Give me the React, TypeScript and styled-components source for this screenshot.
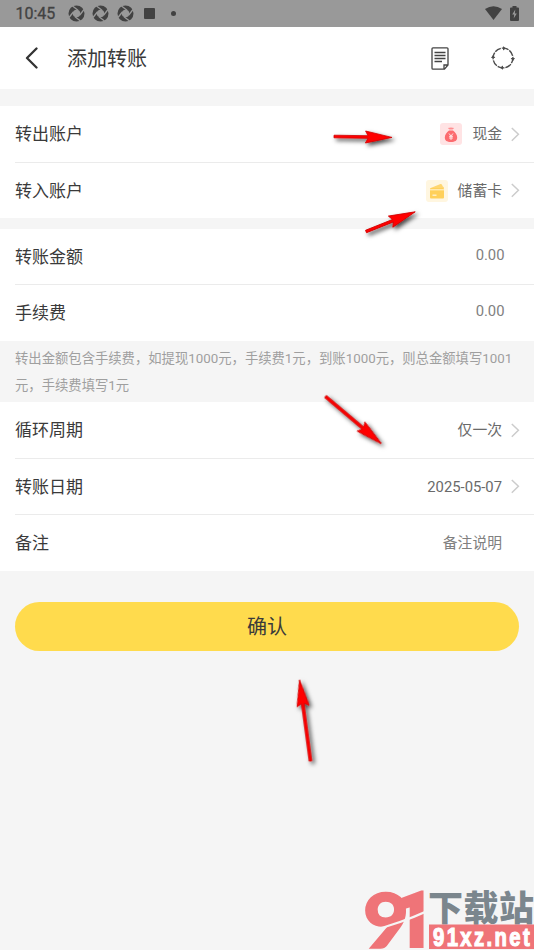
import React from "react";
import styled, { createGlobalStyle } from "styled-components";

const GlobalStyle = createGlobalStyle`
  * { box-sizing: border-box; }
  body {
    margin: 0;
    background: #f5f5f5;
    font-family: Roboto, "Noto Sans CJK SC", sans-serif;
    color: #3a3a3a;
  }
`;

const Screen = styled.div`
  position: relative;
  width: 534px;
  height: 950px;
  overflow: hidden;
  background: #f5f5f5;
`;

const StatusBar = styled.div`
  display: flex;
  align-items: center;
  height: 27px;
  padding: 0 15.5px 1px;
  background: #999;
  color: #424242;
`;

const Clock = styled.span`
  width: 52px;
  padding-top: 1px;
  font-size: 16px;
  line-height: 27px;
  font-weight: 400;
  -webkit-text-stroke: 0.3px #424242;
`;

const StatusIcons = styled.div<{ $grow?: boolean }>`
  display: flex;
  align-items: center;
  gap: 7.5px;
  flex: ${(p) => (p.$grow ? 1 : "none")};
  svg { display: block; }
`;

const Square = styled.i`
  width: 11px;
  height: 11px;
  margin-left: 3px;
  border-radius: 1px;
  background: #424242;
`;

const Dot = styled.i`
  width: 5px;
  height: 5px;
  margin-left: 8px;
  border-radius: 50%;
  background: #424242;
`;

const Header = styled.header`
  display: flex;
  align-items: center;
  height: 62px;
  padding: 0 19px 0 24px;
  background: #fff;
  svg { display: block; }
`;

const Title = styled.h1`
  flex: 1;
  margin: 0 0 0 28px;
  padding-top: 1px;
  font-size: 20px;
  line-height: 30px;
  font-weight: 400;
`;

const HeaderActions = styled.div`
  display: flex;
  align-items: center;
  gap: 41px;
`;

const Group = styled.section<{ $top?: number }>`
  margin-top: ${(p) => p.$top ?? 0}px;
  background: #fff;
`;

const Row = styled.div<{ $last?: boolean; $h?: number }>`
  display: flex;
  align-items: center;
  height: ${(p) => p.$h ?? 56}px;
  margin-left: 15px;
  padding-right: 14px;
  border-bottom: ${(p) => (p.$last ? "none" : "1px solid #ebebeb")};
`;

const Label = styled.span`
  flex: 1;
  font-size: 17px;
  line-height: 26px;
`;

const Value = styled.span<{ $tone?: string; $inset?: number; $raise?: number }>`
  margin-right: ${(p) => p.$inset ?? 9}px;
  padding-bottom: ${(p) => p.$raise ?? 0}px;
  font-size: 14.8px;
  line-height: 24px;
  color: ${(p) => p.$tone ?? "#6a6a6a"};
`;

const Badge = styled.span<{ $bg: string }>`
  display: flex;
  width: 22px;
  height: 22px;
  margin-right: 10px;
  border-radius: 3px;
  background: ${(p) => p.$bg};
`;

const Note = styled.p`
  height: 61px;
  margin: 0;
  padding: 4px 15px 0;
  font-size: 13.33px;
  line-height: 27px;
  color: #9f9f9f;
`;

const Confirm = styled.button`
  display: block;
  width: 504px;
  height: 49px;
  margin: 31px 15px 0;
  padding: 2px 0 0;
  border: 0;
  border-radius: 25px;
  background: #ffdb4d;
  color: #3a3a3a;
  font: 400 20px/47px Roboto, "Noto Sans CJK SC", sans-serif;
`;

const Overlay = styled.svg`
  position: absolute;
  inset: 0;
  pointer-events: none;
`;

const Shutter = () => (
  <svg width="17" height="17" viewBox="0 0 17 17">
    <circle cx="8.5" cy="8.5" r="5.900" fill="none" stroke="#424242" strokeWidth="4.2" />
    <path d="M4.5 1 10 5.2M16 4.500 11.8 10M12.500 16 7 11.8M1 12.500 5.3 7" stroke="#999" strokeWidth="1.300" />
  </svg>
);

const Wifi = () => (
  <svg width="17" height="14" viewBox="0 0 17 14">
    <path d="M0 3Q8.500-2.500 17 3L8.500 14Z" fill="#424242" />
  </svg>
);

const Battery = () => (
  <svg width="9" height="15" viewBox="0 0 9 15">
    <path d="M2.500 0h4v1.500H8q1 0 1 1V14q0 1-1 1H1q-1 0-1-1V2.500q0-1 1-1h1.500Z" fill="#424242" />
    <path d="M5.300 3.500 2.200 8.500h2L3.700 12.500 6.800 7.500h-2Z" fill="#999" />
  </svg>
);

const Back = () => (
  <svg width="15" height="22" viewBox="0 0 15 22">
    <path d="M12.500 1.500 3 11l9.500 9.500" fill="none" stroke="#333" strokeWidth="2.300" strokeLinecap="round" strokeLinejoin="round" />
  </svg>
);

const Document = () => (
  <svg width="19" height="23" viewBox="0 0 19 23" fill="none" stroke="#444" strokeWidth="1.300">
    <path d="M2 .8h14q1 0 1 1V18l-3.500 4.200H2q-1 0-1-1V1.800q0-1 1-1ZM13 22v-4h4" />
    <path d="M3.500 5.500h11M3.500 8.500h11M3.500 11.500h11M3.500 14.500h7.500" />
  </svg>
);

const Cycle = () => (
  <svg width="24" height="24" viewBox="0 0 24 24">
    <circle cx="12" cy="12" r="9.900" fill="none" stroke="#4c4c4c" strokeWidth="1.400" strokeDasharray="3.500 1 6.500 1 2.550 1" strokeDashoffset="-2" />
    <path d="m12 .2 3.200 2-3.200 2.200ZM24 12l-2.100 3.200-2.200-3.200ZM12 23.800l-3.200-2 3.200-2.200ZM0 12l2.100-3.200 2.200 3.200Z" fill="#4c4c4c" />
  </svg>
);

const Chevron = () => (
  <svg width="9" height="15" viewBox="0 0 9 15">
    <path d="m.8 1 6.600 6.300L.8 13.700" fill="none" stroke="#ccc" strokeWidth="1.500" />
  </svg>
);

const MoneyBag = () => (
  <svg width="22" height="22" viewBox="0 0 22 22">
    <path d="M7.800 5Q11 3.800 14.200 5L12.500 6.500H9.500Z" fill="#ff8f91" />
    <path d="M9 7.500h4c2.400 1.800 4.200 4.500 4.200 7 0 3-2 4.500-6.200 4.500s-6.200-1.500-6.200-4.500c0-2.500 1.800-5.200 4.200-7Z" fill="#fc6b6f" />
    <path d="m9 10.500 2 2.500 2-2.500M11 13v4M9 13.300h4M9 15h4" fill="none" stroke="#fff" strokeOpacity=".85" strokeWidth=".9" />
  </svg>
);

const Card = () => (
  <svg width="22" height="22" viewBox="0 0 22 22">
    <path d="M4 8.300 14.500 4q1-.3 1.500.8l.8 1.700q1.200.2 1.200 1.800Z" fill="#ffd670" />
    <rect x="4" y="8" width="14" height="10.500" rx="1" fill="#ffd05a" />
    <path d="M4 9.800h14" stroke="#fff3d5" strokeWidth="1" />
    <path d="M6.500 15.200h4" stroke="#fff3d5" strokeWidth="1.300" />
  </svg>
);

const arrows = [
  { x: 334, y: 136.500, angle: 0.900, length: 58 },
  { x: 366, y: 231.500, angle: -21.800, length: 53 },
  { x: 325.500, y: 396.500, angle: 40.200, length: 73 },
  { x: 310.500, y: 761, angle: -97.700, length: 82 },
];

const Annotations = () => (
  <Overlay width="534" height="950" viewBox="0 0 534 950">
    <defs>
      <filter id="shadow" filterUnits="userSpaceOnUse" x="0" y="0" width="534" height="950">
        <feDropShadow dx="2.500" dy="2.500" stdDeviation="2.200" floodColor="#000" floodOpacity=".7" />
      </filter>
    </defs>
    <g filter="url(#shadow)">
      {arrows.map((a) => (
        <path
          key={a.y}
          transform={`translate(${a.x} ${a.y}) rotate(${a.angle})`}
          d={`M0-1.300H${a.length - 24}L${a.length - 26.5}-6 ${a.length} 0 ${a.length - 26.5} 6 ${a.length - 24} 1.300H0Z`}
          fill="#f00"
          stroke="#d00808"
          strokeWidth=".8"
        />
      ))}
    </g>
  </Overlay>
);

const Brand = styled.div`
  position: absolute;
  right: 0;
  bottom: 0;
  width: 172px;
  height: 62px;
  svg { display: block; }
`;

const Watermark = () => (
  <Brand>
    <svg width="172" height="62" viewBox="0 0 172 62">
      <g fill="#ef7478" stroke="#ef7478" fontWeight="900">
        <text x="1" y="60" fontFamily="Lato" fontSize="76" strokeWidth="1.500" textLength="46" lengthAdjust="spacingAndGlyphs">9</text>
        <text x="31" y="59" fontFamily="Roboto" fontSize="77" strokeWidth="2" textLength="42" lengthAdjust="spacingAndGlyphs">1</text>
      </g>
      <path d="M8 42Q36 35 66 21.500L66 24Q40 36 8 44Z" fill="#f5f5f5" />
      <text x="66" y="32.500" fontFamily="Noto Sans CJK SC" fontWeight="900" fontSize="35" textLength="106" fill="#7b868d">下载站</text>
      <rect x="67" y="36.500" width="105" height="24.500" fill="#ef7478" />
      <text transform="translate(71 58) scale(.78 1)" fontFamily="Liberation Sans" fontWeight="700" fontSize="26" textLength="124" fill="#fff" stroke="#fff" strokeWidth="1.200">91xz.net</text>
    </svg>
  </Brand>
);

export default function App() {
  return (
    <Screen>
      <GlobalStyle />
      <StatusBar>
        <Clock>10:45</Clock>
        <StatusIcons $grow>
          <Shutter />
          <Shutter />
          <Shutter />
          <Square />
          <Dot />
        </StatusIcons>
        <StatusIcons>
          <Wifi />
          <Battery />
        </StatusIcons>
      </StatusBar>
      <Header>
        <Back />
        <Title>添加转账</Title>
        <HeaderActions>
          <Document />
          <Cycle />
        </HeaderActions>
      </Header>

      <Group $top={17}>
        <Row $h={57}>
          <Label>转出账户</Label>
          <Badge $bg="#ffe3e4"><MoneyBag /></Badge>
          <Value>现金</Value>
          <Chevron />
        </Row>
        <Row $last $h={55}>
          <Label>转入账户</Label>
          <Badge $bg="#fff6e0"><Card /></Badge>
          <Value>储蓄卡</Value>
          <Chevron />
        </Row>
      </Group>

      <Group $top={11}>
        <Row>
          <Label>转账金额</Label>
          <Value $tone="#808080" $inset={15.5} $raise={4}>0.00</Value>
        </Row>
        <Row $last>
          <Label>手续费</Label>
          <Value $tone="#808080" $inset={15.5} $raise={4}>0.00</Value>
        </Row>
      </Group>

      <Note>转出金额包含手续费，如提现1000元，手续费1元，到账1000元，则总金额填写1001元，手续费填写1元</Note>

      <Group>
        <Row $h={57}>
          <Label>循环周期</Label>
          <Value>仅一次</Value>
          <Chevron />
        </Row>
        <Row>
          <Label>转账日期</Label>
          <Value>2025-05-07</Value>
          <Chevron />
        </Row>
        <Row $last>
          <Label>备注</Label>
          <Value $tone="#808080" $inset={18}>备注说明</Value>
        </Row>
      </Group>

      <Confirm>确认</Confirm>
      <Annotations />
      <Watermark />
    </Screen>
  );
}
